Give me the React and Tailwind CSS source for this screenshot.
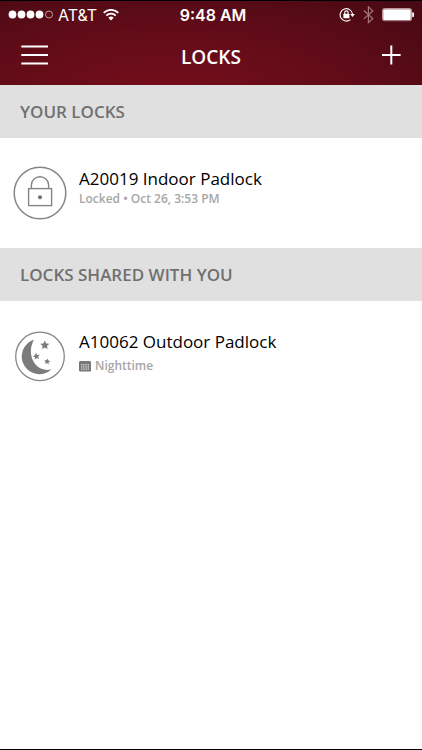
import React from "react";

const SignalDots = () => (
  <svg className="w-[46px] h-3" viewBox="0 0 46 12" aria-label="Signal strength">
    {[4, 13, 22, 31].map(x => (
      <circle key={x} cx={x + 0.5} cy="5.5" r="3.9" fill="#fff" />
    ))}
    <circle cx="41" cy="5.5" r="3.5" fill="none" stroke="#d9b9bd" strokeWidth="0.8" />
  </svg>
);

const WifiIcon = () => (
  <svg className="w-4 h-3" viewBox="0 0 16 12" fill="none" stroke="#fff" aria-label="Wi-Fi">
    <path d="M0.7 3.9a10.4 10.4 0 0 1 14.6 0" strokeWidth="1.9" />
    <path d="M3.3 6.6a6.7 6.7 0 0 1 9.4 0" strokeWidth="1.9" />
    <path d="M8 11.4L5.4 8.7a3.8 3.8 0 0 1 5.2 0z" fill="#fff" stroke="none" />
  </svg>
);

const RotationLockIcon = () => (
  <svg className="w-4 h-[14px]" viewBox="0 0 16 14" fill="none" stroke="#fff" aria-label="Rotation lock">
    <path d="M11.4 11.6A6.2 6.2 0 1 1 13.5 6" strokeWidth="1.1" />
    <path d="M11.2 6.1h4.6L13.5 9z" fill="#fff" stroke="none" />
    <rect x="4.4" y="5.8" width="6" height="4.4" rx="0.5" fill="#fff" stroke="none" />
    <path d="M5.7 6V4.6a1.7 1.7 0 0 1 3.4 0V6" strokeWidth="1.1" />
  </svg>
);

const BluetoothIcon = () => (
  <svg className="w-[11px] h-[18px]" viewBox="0 0 11 18" fill="none" stroke="#a5747c" strokeWidth="1.2" aria-label="Bluetooth">
    <path d="M0.8 4.5l9 8L5.4 16.6V0.8l4.4 4.1-9 8" />
  </svg>
);

const BatteryIcon = () => (
  <svg className="w-8 h-[14px]" viewBox="0 0 32 14" aria-label="Battery">
    <rect x="0.5" y="0.5" width="29" height="12.2" rx="1.8" fill="none" stroke="#d9b9bd" strokeWidth="0.8" />
    <rect x="1.2" y="1.2" width="27.6" height="10.8" rx="1" fill="#fff" />
    <path d="M30.4 4.6a2 2 0 0 1 0 4.2z" fill="#fff" stroke="#fff" strokeWidth="0.6" />
  </svg>
);

const PadlockIcon = () => (
  <svg className="w-[54px] h-[54px]" viewBox="0 0 54 54" fill="none" stroke="#858585" aria-hidden="true">
    <circle cx="27" cy="27" r="25.8" strokeWidth="1.5" />
    <rect x="15.6" y="22.6" width="23" height="17" strokeWidth="1.4" />
    <path d="M18.4 22.6v-3.6a8.6 8.2 0 0 1 17.2 0v3.6" strokeWidth="1.4" />
    <circle cx="27" cy="31.2" r="2" fill="#707070" stroke="none" />
  </svg>
);

const STAR = "M0 -10L2.9 -3.6L9.5 -3.1L4.5 1.6L5.9 8.1L0 4.6L-5.9 8.1L-4.5 1.6L-9.5 -3.1L-2.9 -3.6Z";

const NightIcon = () => (
  <svg className="w-[54px] h-[54px]" viewBox="0 0 54 54" fill="#7b7b7b" aria-hidden="true">
    <circle cx="27" cy="27.4" r="24.3" fill="none" stroke="#858585" strokeWidth="1.3" />
    <path d="M21 10.8A17.6 17.6 0 1 0 38.6 40.2C31.5 42.2 25.8 39.8 21.8 34.6C16.8 27.8 16.6 18.4 21 10.8Z" />
    <path d={STAR} transform="translate(31.8 16.2) scale(0.48)" />
    <path d={STAR} transform="translate(23.4 27.4) rotate(-10) scale(0.37)" />
    <path d={STAR} transform="translate(34.2 32.6) rotate(8) scale(0.32)" />
  </svg>
);

const CalendarIcon = () => (
  <svg className="w-3 h-[11px]" viewBox="0 0 12 11" aria-hidden="true">
    <rect width="12" height="10.6" rx="1.4" fill="#777" />
    {[3, 5.2, 7.4].map(y =>
      [2, 4.2, 6.4, 8.6].map(x => (
        <rect key={`${x}-${y}`} x={x} y={y} width="1.4" height="1.4" fill="#d0d0d0" />
      ))
    )}
  </svg>
);

const StatusBar = () => (
  <div className="h-7 px-2 grid grid-cols-[1fr_auto_1fr] items-center font-['Inter',sans-serif]">
    <div className="flex items-center gap-1">
      <SignalDots />
      <span className="pr-0.5 text-[16px]">AT&amp;T</span>
      <WifiIcon />
    </div>
    <span className="pl-1 text-[16px] font-semibold">9:48 AM</span>
    <div className="flex items-center justify-end gap-2">
      <RotationLockIcon />
      <BluetoothIcon />
      <BatteryIcon />
    </div>
  </div>
);

const Header = () => (
  <header className="border-t border-black bg-[radial-gradient(ellipse_at_40%_120%,#780d1c_0%,#620c18_50%,#460913_100%)] text-white">
    <StatusBar />
    <div className="h-14 px-5 pb-1 grid grid-cols-[1fr_auto_1fr] items-center">
      <button type="button" aria-label="Menu" className="justify-self-start">
        <svg className="w-[29px] h-[22px]" viewBox="0 0 29 22" stroke="#fff" strokeWidth="2">
          <path d="M1.3 2.5h26.7M1.3 11h26.7M1.3 19.5h26.7" />
        </svg>
      </button>
      <h1 className="pt-1 text-[19px] leading-6 font-semibold">LOCKS</h1>
      <button type="button" aria-label="Add lock" className="justify-self-end">
        <svg className="w-5 h-5" viewBox="0 0 20 20" stroke="#fff" strokeWidth="2">
          <path d="M0 10h18.6M9.3 0.6v18.8" />
        </svg>
      </button>
    </div>
  </header>
);

const SectionTitle = ({ children }) => (
  <h2 className="h-[53px] px-5 flex items-center bg-[#e0e0e0] text-[#707070] text-[17px] font-semibold">
    {children}
  </h2>
);

const LockRow = ({ icon, name, children }) => (
  <button type="button" className="w-full h-[110px] px-[13px] flex items-center gap-3 text-left">
    {icon}
    <span className="h-[52px] flex flex-col">
      <span className="text-[17px] leading-6 text-black">{name}</span>
      {children}
    </span>
  </button>
);

const App = () => {
  return (
    <div className="min-h-screen flex flex-col bg-white border-b border-black font-['Open_Sans',sans-serif]">
      <Header />
      <main>
        <section>
          <SectionTitle>YOUR LOCKS</SectionTitle>
          <LockRow icon={<PadlockIcon />} name="A20019 Indoor Padlock">
            <span className="text-[12px] leading-4 font-semibold text-[#a6a6a6]">Locked • Oct 26, 3:53 PM</span>
          </LockRow>
        </section>
        <section>
          <SectionTitle>LOCKS SHARED WITH YOU</SectionTitle>
          <LockRow icon={<NightIcon />} name="A10062 Outdoor Padlock">
            <span className="pt-1 flex items-center gap-1 text-[12px] leading-4 font-semibold text-[#a6a6a6]">
              <CalendarIcon />
              Nighttime
            </span>
          </LockRow>
        </section>
      </main>
    </div>
  );
};

export default App;
